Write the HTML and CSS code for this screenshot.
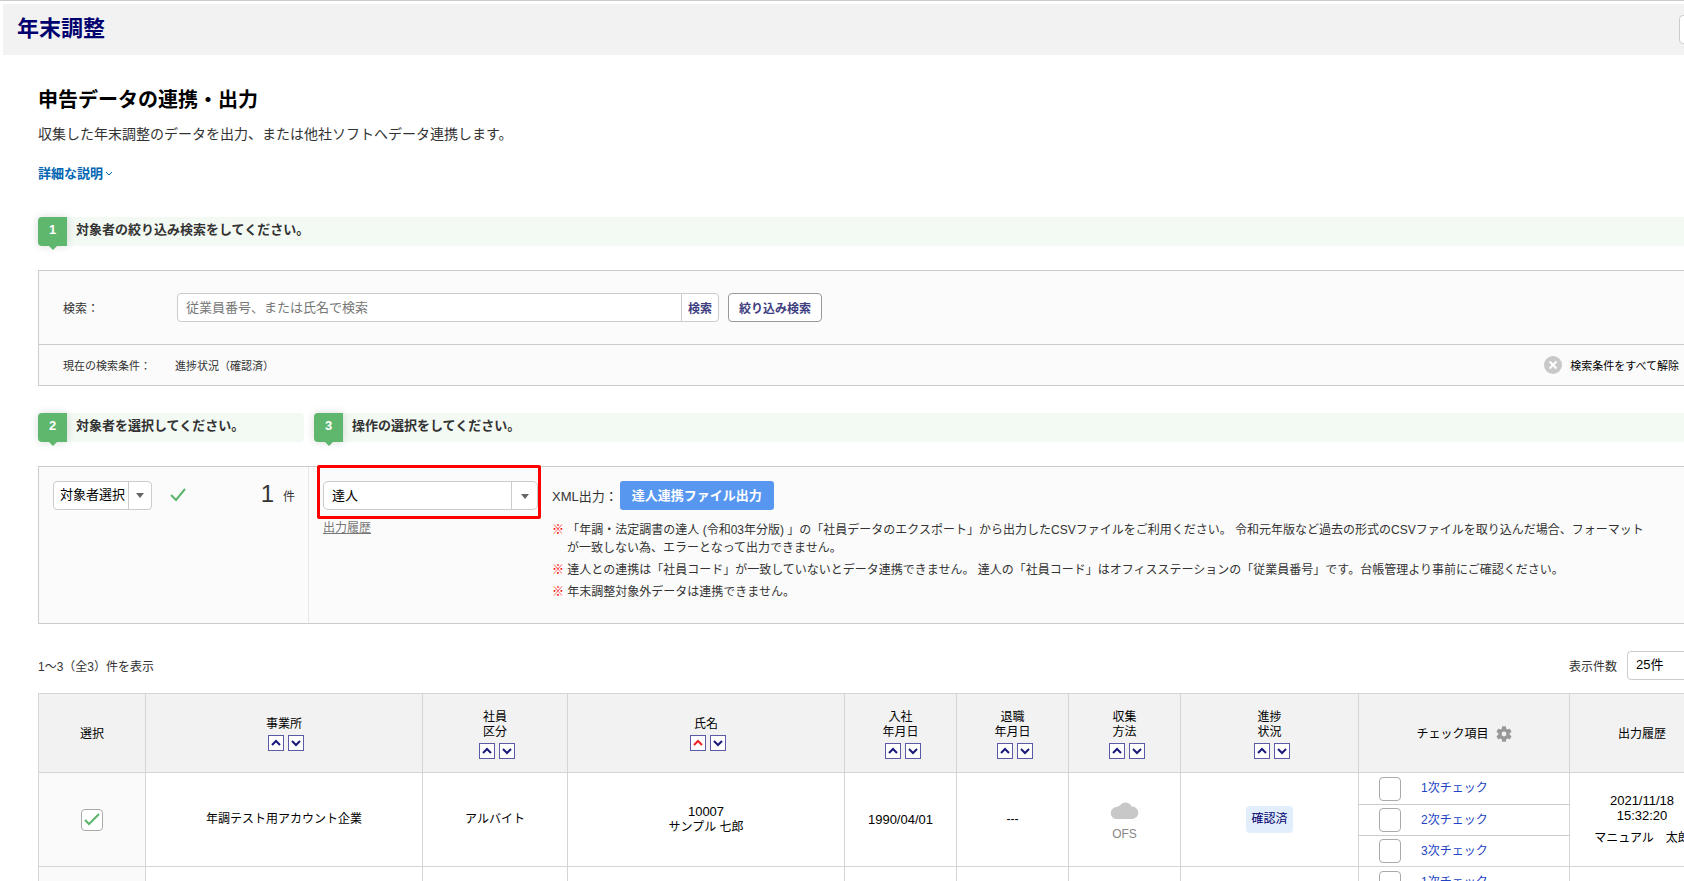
FILE: index.html
```
<!DOCTYPE html>
<html lang="ja">
<head>
    <meta charset="UTF-8">
    <meta name="viewport" content="width=device-width, initial-scale=1.0">
    <title>年末調整</title>
    <link rel="stylesheet" href="styles.css">
</head>
<body>

    <!-- ソート用の矢印 -->
    <svg class="defs" width="0" height="0" aria-hidden="true">
        <symbol id="up" viewBox="0 0 14 14"><path d="M3 9 L7 5 L11 9" fill="none" stroke="currentColor" stroke-width="2"/></symbol>
        <symbol id="down" viewBox="0 0 14 14"><path d="M3 5 L7 9 L11 5" fill="none" stroke="currentColor" stroke-width="2"/></symbol>
    </svg>

    <header class="header">
        <h1>年末調整</h1>
        <button class="header-button" type="button" aria-label="メニュー"></button>
    </header>

    <main class="main">
        <h2>申告データの連携・出力</h2>
        <p class="lead">収集した年末調整のデータを出力、または他社ソフトへデータ連携します。</p>
        <a class="detail" href="#">詳細な説明
            <svg width="8" height="6" viewBox="0 0 8 6"><path d="M1 1 L4 4 L7 1" fill="none" stroke="currentColor" stroke-width="1"/></svg>
        </a>

        <div class="step"><span class="step-num">1</span><span class="step-text">対象者の絞り込み検索をしてください。</span></div>

        <section class="panel">
            <form class="search-row">
                <label class="search-label" for="keyword">検索：</label>
                <div class="search-box">
                    <input type="text" id="keyword" placeholder="従業員番号、または氏名で検索">
                    <button type="button">検索</button>
                </div>
                <button class="filter-button" type="button">絞り込み検索</button>
            </form>
            <div class="condition-row">
                <span class="condition-label">現在の検索条件：</span>
                <span class="condition">進捗状況（確認済）</span>
                <button class="clear-button" type="button">
                    <svg width="18" height="18" viewBox="0 0 18 18"><circle cx="9" cy="9" r="9" fill="#c8c8c8"/><path d="M5.5 5.5 L12.5 12.5 M12.5 5.5 L5.5 12.5" stroke="#fff" stroke-width="2"/></svg>
                    検索条件をすべて解除
                </button>
            </div>
        </section>

        <div class="steps">
            <div class="step step-short"><span class="step-num">2</span><span class="step-text">対象者を選択してください。</span></div>
            <div class="step step-long"><span class="step-num">3</span><span class="step-text">操作の選択をしてください。</span></div>
        </div>

        <section class="panel operation">
            <div class="target">
                <button class="split-button" type="button">
                    <span class="split-text">対象者選択</span>
                    <span class="split-arrow"><i class="caret"></i></span>
                </button>
                <svg class="tick" width="16" height="14" viewBox="0 0 16 14"><path d="M1 7 L6 12 L15 1" fill="none" stroke="#5cb56c" stroke-width="2"/></svg>
                <span class="count">1</span>
                <span class="unit">件</span>
            </div>
            <div class="action">
                <div class="software">
                    <div class="software-select">
                        <select aria-label="連携ソフト">
                            <option>達人</option>
                        </select>
                        <i class="caret"></i>
                    </div>
                    <a class="history" href="#">出力履歴</a>
                </div>
                <div class="output">
                    <div class="output-row">
                        <span>XML出力：</span>
                        <button class="primary" type="button">達人連携ファイル出力</button>
                    </div>
                    <ul class="notes">
                        <li><span class="mark">※</span> 「年調・法定調書の達人 (令和03年分版) 」の「社員データのエクスポート」から出力したCSVファイルをご利用ください。 令和元年版など過去の形式のCSVファイルを取り込んだ場合、フォーマット<br>が一致しない為、エラーとなって出力できません。</li>
                        <li><span class="mark">※</span> 達人との連携は「社員コード」が一致していないとデータ連携できません。 達人の「社員コード」はオフィスステーションの「従業員番号」です。台帳管理より事前にご確認ください。</li>
                        <li><span class="mark">※</span> 年末調整対象外データは連携できません。</li>
                    </ul>
                </div>
            </div>
        </section>

        <div class="list-head">
            <span>1～3（全3）件を表示</span>
            <label class="per-page">表示件数
                <select>
                    <option>25件</option>
                </select>
            </label>
        </div>

        <table class="list">
            <colgroup>
                <col class="col-select">
                <col class="col-office">
                <col class="col-type">
                <col class="col-name">
                <col class="col-date">
                <col class="col-date">
                <col class="col-date">
                <col class="col-status">
                <col class="col-check">
                <col>
            </colgroup>
            <thead>
                <tr>
                    <th>選択</th>
                    <th>事業所
                        <div class="sort"><button type="button" aria-label="昇順"><svg><use href="#up"/></svg></button><button type="button" aria-label="降順"><svg><use href="#down"/></svg></button></div>
                    </th>
                    <th>社員<br>区分
                        <div class="sort"><button type="button" aria-label="昇順"><svg><use href="#up"/></svg></button><button type="button" aria-label="降順"><svg><use href="#down"/></svg></button></div>
                    </th>
                    <th>氏名
                        <div class="sort"><button class="active" type="button" aria-label="昇順"><svg><use href="#up"/></svg></button><button type="button" aria-label="降順"><svg><use href="#down"/></svg></button></div>
                    </th>
                    <th>入社<br>年月日
                        <div class="sort"><button type="button" aria-label="昇順"><svg><use href="#up"/></svg></button><button type="button" aria-label="降順"><svg><use href="#down"/></svg></button></div>
                    </th>
                    <th>退職<br>年月日
                        <div class="sort"><button type="button" aria-label="昇順"><svg><use href="#up"/></svg></button><button type="button" aria-label="降順"><svg><use href="#down"/></svg></button></div>
                    </th>
                    <th>収集<br>方法
                        <div class="sort"><button type="button" aria-label="昇順"><svg><use href="#up"/></svg></button><button type="button" aria-label="降順"><svg><use href="#down"/></svg></button></div>
                    </th>
                    <th>進捗<br>状況
                        <div class="sort"><button type="button" aria-label="昇順"><svg><use href="#up"/></svg></button><button type="button" aria-label="降順"><svg><use href="#down"/></svg></button></div>
                    </th>
                    <th>
                        <div class="check-head">チェック項目
                            <svg width="16" height="16" viewBox="2 2 20 20"><path fill="#999" d="M19.14 12.94c.04-.3.06-.61.06-.94 0-.32-.02-.64-.07-.94l2.03-1.58c.18-.14.23-.41.12-.61l-1.92-3.32c-.12-.22-.37-.29-.59-.22l-2.39.96c-.5-.38-1.03-.7-1.62-.94l-.36-2.54c-.04-.24-.24-.41-.48-.41h-3.84c-.24 0-.43.17-.47.41l-.36 2.54c-.59.24-1.13.57-1.62.94l-2.39-.96c-.22-.08-.47 0-.59.22L2.74 8.87c-.12.21-.08.47.12.61l2.03 1.58c-.05.3-.09.63-.09.94s.02.64.07.94l-2.03 1.58c-.18.14-.23.41-.12.61l1.92 3.32c.12.22.37.29.59.22l2.39-.96c.5.38 1.03.7 1.62.94l.36 2.54c.05.24.24.41.48.41h3.84c.24 0 .44-.17.47-.41l.36-2.54c.59-.24 1.13-.56 1.62-.94l2.39.96c.22.08.47 0 .59-.22l1.92-3.32c.12-.22.07-.47-.12-.61l-2.01-1.58zM12 15a3 3 0 1 1 0-6 3 3 0 0 1 0 6z"/></svg>
                        </div>
                    </th>
                    <th>出力履歴</th>
                </tr>
            </thead>
            <tbody>
                <tr>
                    <td class="select-cell">
                        <label class="select-box">
                            <input type="checkbox" aria-label="選択" checked>
                            <svg width="16" height="14" viewBox="0 0 16 14"><path d="M1 7 L5 11 L15 1" fill="none" stroke="#5cb56c" stroke-width="2"/></svg>
                        </label>
                    </td>
                    <td>年調テスト用アカウント企業</td>
                    <td>アルバイト</td>
                    <td><span class="num">10007</span><br>サンプル 七郎</td>
                    <td class="num">1990/04/01</td>
                    <td>---</td>
                    <td class="ofs">
                        <svg width="28" height="18" viewBox="0 0 28 18"><path fill="#c8c8c8" d="M6 18a6 6 0 0 1-.5-12 1 1 0 0 0 .8-.2A5 5 0 0 1 9 4.500 6.500 6.500 0 0 1 20.500 5.500 6.300 6.300 0 0 1 22 18z"/></svg>
                        <div>OFS</div>
                    </td>
                    <td><span class="badge">確認済</span></td>
                    <td class="check-cell">
                        <ul class="checks">
                            <li><input type="checkbox" id="c11"><label for="c11"><a href="#">1次チェック</a></label></li>
                            <li><input type="checkbox" id="c12"><label for="c12"><a href="#">2次チェック</a></label></li>
                            <li><input type="checkbox" id="c13"><label for="c13"><a href="#">3次チェック</a></label></li>
                        </ul>
                    </td>
                    <td>
                        <div class="num">2021/11/18<br>15:32:20</div>
                        <div class="operator">マニュアル　太郎</div>
                    </td>
                </tr>
                <tr>
                    <td class="select-cell"></td>
                    <td></td>
                    <td></td>
                    <td></td>
                    <td></td>
                    <td></td>
                    <td></td>
                    <td></td>
                    <td class="check-cell">
                        <ul class="checks">
                            <li><input type="checkbox" id="c21"><label for="c21"><a href="#">1次チェック</a></label></li>
                        </ul>
                    </td>
                    <td></td>
                </tr>
            </tbody>
        </table>
    </main>

</body>
</html>
```
FILE: styles.css
```
* {
    box-sizing: border-box;
}
body {
    margin: 0;
    height: 100vh;
    overflow: hidden;
    border-top: 1px solid #ccc;
    background-color: #fff;
    color: #333;
    font-family: "Liberation Sans", "Noto Sans CJK JP", sans-serif;
    font-size: 12px;
}
button, input, select {
    font-family: inherit;
    font-size: 12px;
    margin: 0;
}
button {
    cursor: pointer;
    padding: 0;
}
h1, h2, p, ul {
    margin: 0;
    padding: 0;
}
ul {
    list-style: none;
}
svg {
    display: block;
}
.defs {
    position: absolute;
}

/* ヘッダー */
.header {
    display: flex;
    justify-content: space-between;
    align-items: center;
    height: 51px;
    margin: 3px -31px 0 3px;
    padding: 0 0 0 14px;
    background-color: #f2f2f2;
}
h1 {
    padding-bottom: 2px;
    color: #00006e;
    font-size: 22px;
    line-height: 30px;
}
.header-button {
    width: 36px;
    height: 29px;
    background-color: #fff;
    border: 1px solid #ccc;
    border-radius: 4px;
}

/* 右端は画面の外まで続く */
.main {
    margin-right: -31px;
    padding: 30px 0 0 38px;
}
h2 {
    color: #000;
    font-size: 20px;
    line-height: 30px;
}
.lead {
    margin-top: 9px;
    font-size: 14px;
    line-height: 20px;
}
.detail {
    display: flex;
    align-items: center;
    gap: 2px;
    width: max-content;
    margin: 20px 0 33px;
    color: #0066b3;
    font-size: 13px;
    font-weight: bold;
    line-height: 20px;
    text-decoration: none;
}

/* ステップ見出し */
.steps {
    display: flex;
    gap: 10px;
    margin-top: 27px;
}
.step {
    display: flex;
    height: 29px;
    background-color: #f3faf4;
    border-radius: 4px;
    color: #333;
    font-size: 13px;
    font-weight: bold;
    line-height: 26px;
}
.step-short {
    width: 266px;
}
.step-long {
    flex: 1;
}
.step-num {
    position: relative;
    width: 29px;
    background-color: #5fb76e;
    border-radius: 4px 0 0 4px;
    box-shadow: 0 0 8px rgba(0, 0, 0, 0.15);
    color: #fff;
    text-align: center;
}
.step-num::after {
    content: "";
    position: absolute;
    left: 11px;
    top: 29px;
    border: 4px solid transparent;
    border-top-color: #5fb76e;
    border-bottom: 0;
}
.step-text {
    padding-left: 9px;
}

/* 検索 */
.panel {
    margin-top: 24px;
    background-color: #fbfbfb;
    border: 1px solid #ccc;
}
.search-row {
    display: flex;
    align-items: center;
    height: 73px;
    padding-left: 24px;
}
.search-label {
    width: 114px;
}
.search-box {
    display: flex;
    width: 542px;
    height: 29px;
    margin-right: 9px;
    background-color: #fff;
    border: 1px solid #ccc;
    border-radius: 4px;
    overflow: hidden;
}
.search-box input {
    flex: 1;
    padding: 0 8px;
    border: 0;
    background: none;
    font-size: 13px;
}
.search-box input::placeholder {
    color: #777;
}
.search-box button {
    width: 37px;
    border: 0;
    border-left: 1px solid #ccc;
    background: none;
    color: #404080;
    font-weight: bold;
}
.filter-button {
    height: 29px;
    padding: 0 10px;
    background-color: #fff;
    border: 1px solid #999;
    border-radius: 4px;
    color: #404080;
    font-weight: bold;
}
.condition-row {
    display: flex;
    align-items: center;
    height: 41px;
    padding: 0 35px 0 24px;
    border-top: 1px solid #ccc;
    font-size: 11px;
}
.condition-label {
    width: 112px;
}
.clear-button {
    display: flex;
    align-items: center;
    gap: 8px;
    margin-left: auto;
    border: 0;
    background: none;
    color: #000;
    font-size: 11px;
}

/* 対象者・操作 */
.operation {
    display: flex;
    height: 158px;
}
.target {
    display: flex;
    align-items: flex-start;
    width: 270px;
    padding: 14px 13px 0 14px;
    border-right: 1px solid #e8e8e8;
    line-height: 29px;
}
.split-button {
    display: flex;
    width: 99px;
    height: 29px;
    background-color: #fff;
    border: 1px solid #ccc;
    border-radius: 4px;
    color: #000;
    font-size: 13px;
    line-height: 26px;
}
.split-text {
    flex: 1;
    padding-left: 3px;
}
.split-arrow {
    display: flex;
    align-items: center;
    justify-content: center;
    width: 23px;
    border-left: 1px solid #ccc;
}
.caret {
    border: 4px solid transparent;
    border-top: 5px solid #666;
    border-bottom: 0;
}
.tick {
    margin: 7px 0 0 18px;
}
.count {
    margin-left: auto;
    font-size: 24px;
    line-height: 26px;
}
.unit {
    margin-left: 9px;
    line-height: 32px;
}
.action {
    display: flex;
    flex: 1;
    gap: 14px;
    padding: 14px 0 0 14px;
}
.software {
    width: 215px;
}
.software-select {
    position: relative;
    height: 29px;
}
.software-select::after {
    content: "";
    position: absolute;
    inset: -16px -3px -9px -6px;
    border: 3px solid #f00;
    border-radius: 2px;
    pointer-events: none;
}
.software-select select {
    appearance: none;
    width: 100%;
    height: 100%;
    padding: 0 8px;
    border: 1px solid #ccc;
    border-radius: 5px;
    background: linear-gradient(#ccc, #ccc) no-repeat right 25px top / 1px 100% #fff;
    color: #000;
    font-size: 13px;
}
.software-select .caret {
    position: absolute;
    top: 13px;
    right: 9px;
}
.history {
    display: block;
    width: max-content;
    margin-top: 9px;
    color: #777;
    line-height: 18px;
}
.output {
    flex: 1;
}
.output-row {
    display: flex;
    align-items: center;
    gap: 2px;
    font-size: 13px;
}
.primary {
    height: 29px;
    padding: 0 12px 2px;
    border: 0;
    border-radius: 3px;
    background-color: #5897f0;
    color: #fff;
    font-size: 13px;
    font-weight: bold;
}
.notes {
    margin-top: 11px;
    line-height: 18px;
}
.notes li {
    margin-bottom: 4px;
    padding-left: 15px;
    text-indent: -15px;
    white-space: nowrap;
}
.mark {
    color: #f00;
    font-weight: bold;
}

/* 一覧 */
.list-head {
    display: flex;
    justify-content: space-between;
    align-items: center;
    height: 29px;
    margin: 27px 0 13px;
}
.per-page {
    display: flex;
    align-items: center;
    gap: 10px;
}
.per-page select {
    appearance: none;
    width: 88px;
    height: 29px;
    padding: 0 8px 2px;
    background-color: #fff;
    border: 1px solid #ccc;
    border-radius: 4px;
    color: #000;
    font-size: 13px;
}
.list {
    width: 100%;
    table-layout: fixed;
    border-collapse: collapse;
    color: #000;
    line-height: 15px;
    text-align: center;
}
.col-select {
    width: 107px;
}
.col-office, .col-name {
    width: 277px;
}
.col-type {
    width: 145px;
}
.col-date {
    width: 112px;
}
.col-status {
    width: 178px;
}
.col-check {
    width: 211px;
}
th, td {
    padding: 0;
    border: 1px solid #d5d5d5;
}
th {
    height: 79px;
    padding-top: 2px;
    background-color: #f2f2f2;
    font-weight: normal;
}
td {
    height: 94px;
}
.sort {
    display: flex;
    justify-content: center;
    gap: 4px;
    margin-top: 3px;
    padding-left: 4px;
}
.sort button {
    width: 16px;
    height: 16px;
    background-color: #fff;
    border: 1px solid #5a5aa5;
    color: #1a1a7a;
}
.sort .active {
    color: #e22;
}
.sort svg {
    width: 14px;
    height: 14px;
}
.check-head {
    display: flex;
    align-items: center;
    justify-content: center;
    gap: 7px;
}
.select-cell {
    background-color: #fafafa;
}
.select-box {
    display: inline-grid;
    place-items: center;
    vertical-align: middle;
}
.select-box > * {
    grid-area: 1 / 1;
}
input[type="checkbox"] {
    appearance: none;
    width: 22px;
    height: 22px;
    background-color: #fff;
    border: 1px solid #aaa;
    border-radius: 4px;
}
.num {
    font-size: 13px;
}
.ofs {
    padding-top: 4px;
    color: #888;
}
.ofs svg {
    margin: 0 auto 8px;
}
.badge {
    display: inline-block;
    padding: 6px 5px;
    border-radius: 4px;
    background-color: #e2eefb;
    color: #00006e;
}
.check-cell {
    vertical-align: top;
}
.checks li {
    display: flex;
    align-items: center;
    gap: 20px;
    height: 31px;
    padding-left: 20px;
}
.checks li + li {
    border-top: 1px solid #ccc;
}
.checks input[type="checkbox"] {
    height: 24px;
}
.checks a {
    color: #2343c3;
    text-decoration: none;
}
.operator {
    margin-top: 8px;
}
```
